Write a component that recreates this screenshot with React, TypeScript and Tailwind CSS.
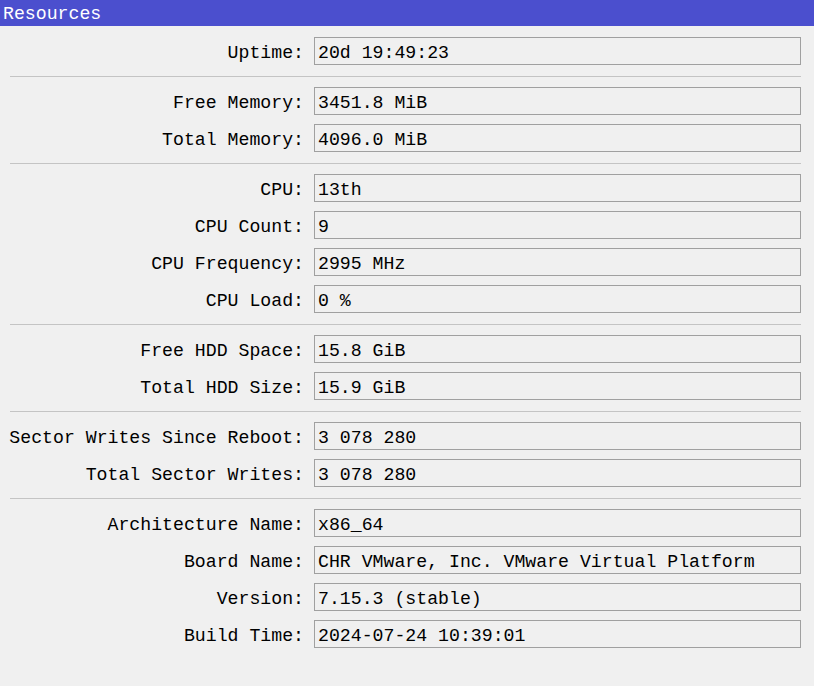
const groups: [string, string][][] = [
  [["Uptime:", "20d 19:49:23"]],
  [
    ["Free Memory:", "3451.8 MiB"],
    ["Total Memory:", "4096.0 MiB"],
  ],
  [
    ["CPU:", "13th"],
    ["CPU Count:", "9"],
    ["CPU Frequency:", "2995 MHz"],
    ["CPU Load:", "0 %"],
  ],
  [
    ["Free HDD Space:", "15.8 GiB"],
    ["Total HDD Size:", "15.9 GiB"],
  ],
  [
    ["Sector Writes Since Reboot:", "3 078 280"],
    ["Total Sector Writes:", "3 078 280"],
  ],
  [
    ["Architecture Name:", "x86_64"],
    ["Board Name:", "CHR VMware, Inc. VMware Virtual Platform"],
    ["Version:", "7.15.3 (stable)"],
    ["Build Time:", "2024-07-24 10:39:01"],
  ],
];

function Row({ label, value }: { label: string; value: string }) {
  return (
    <div className="flex h-[28px] leading-[20px]">
      <div className="w-[294px] shrink-0 h-[28px] pt-[4px] flex items-center justify-end whitespace-pre">{label}</div>
      <div className="ml-[10px] flex-1 h-[28px] border border-[#a0a0a0] px-[3px] pt-[4px] flex items-center whitespace-pre">
        {value}
      </div>
    </div>
  );
}

export default function App() {
  return (
    <div
      className="w-[814px] h-[686px] bg-[#f0f0f0] text-[18.2px] text-[#000] overflow-hidden"
      style={{ fontFamily: '"Liberation Mono", "Noto Sans CJK SC", monospace' }}
    >
      {/* Title */}
      <div className="h-[26px] bg-[#4b4fce] text-white pl-[3px] pt-[2px] flex items-center leading-none">
        Resources
      </div>

      <div className="pl-[10px] pr-[13px] pt-[11px]">
        {groups.map((g, i) => (
          <div key={i}>
            {i > 0 && <div className="h-px bg-[#c4c4c4] mt-[11px] mb-[10px]" />}
            <div className="flex flex-col gap-[9px]">
              {g.map(([l, v]) => (
                <Row key={l} label={l} value={v} />
              ))}
            </div>
          </div>
        ))}
      </div>
    </div>
  );
}
